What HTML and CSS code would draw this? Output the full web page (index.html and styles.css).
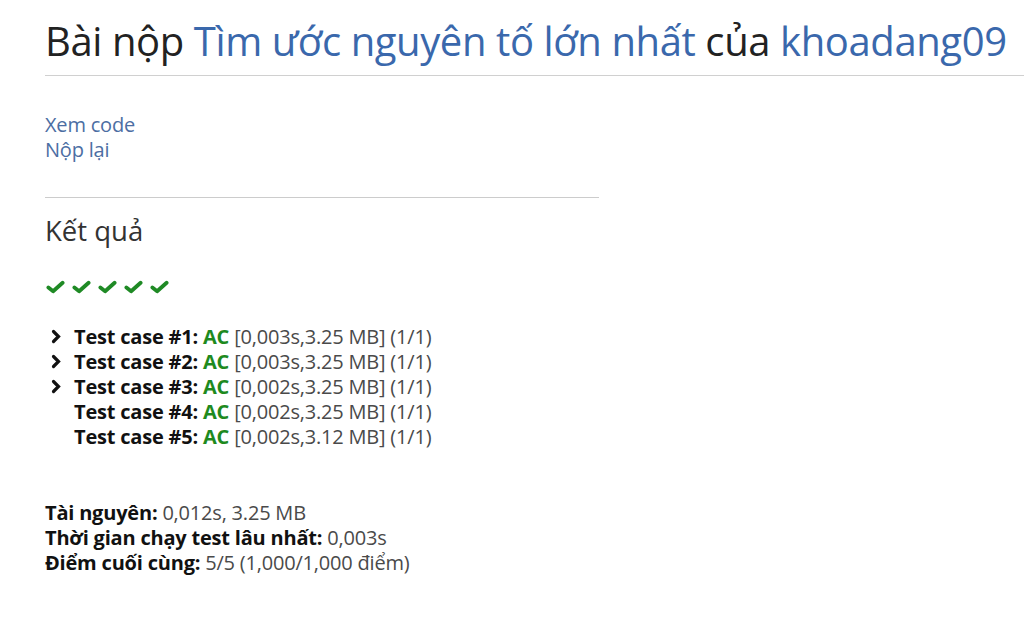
FILE: index.html
```html
<!DOCTYPE html>
<html lang="vi">
<head>
<meta charset="utf-8">
<link rel="stylesheet" href="styles.css">
</head>
<body>
<div class="page">
  <h1 class="title">Bài nộp <a href="#">Tìm ước nguyên tố lớn nhất</a> của <a href="#">khoadang09</a></h1>
  <div class="content">
    <div class="links">
      <a href="#">Xem code</a>
      <a href="#">Nộp lại</a>
    </div>
    <hr class="sep">
    <h2 class="result-title">Kết quả</h2>
    <div class="checks">
      <svg class="check" viewBox="0 0 20 14"><path d="M2.5 7.5 L7.5 11.5 L17.5 2.5"/></svg>
      <svg class="check" viewBox="0 0 20 14"><path d="M2.5 7.5 L7.5 11.5 L17.5 2.5"/></svg>
      <svg class="check" viewBox="0 0 20 14"><path d="M2.5 7.5 L7.5 11.5 L17.5 2.5"/></svg>
      <svg class="check" viewBox="0 0 20 14"><path d="M2.5 7.5 L7.5 11.5 L17.5 2.5"/></svg>
      <svg class="check" viewBox="0 0 20 14"><path d="M2.5 7.5 L7.5 11.5 L17.5 2.5"/></svg>
    </div>
    <div class="cases">
      <div class="case"><span class="chev"><svg viewBox="0 0 10 14"><path d="M2.5 2 L7.5 7 L2.5 12"/></svg></span><span><b>Test case #1:</b> <span class="ac">AC</span> [0,003s,3.25 MB] (1/1)</span></div>
      <div class="case"><span class="chev"><svg viewBox="0 0 10 14"><path d="M2.5 2 L7.5 7 L2.5 12"/></svg></span><span><b>Test case #2:</b> <span class="ac">AC</span> [0,003s,3.25 MB] (1/1)</span></div>
      <div class="case"><span class="chev"><svg viewBox="0 0 10 14"><path d="M2.5 2 L7.5 7 L2.5 12"/></svg></span><span><b>Test case #3:</b> <span class="ac">AC</span> [0,002s,3.25 MB] (1/1)</span></div>
      <div class="case"><span class="chev"></span><span><b>Test case #4:</b> <span class="ac">AC</span> [0,002s,3.25 MB] (1/1)</span></div>
      <div class="case"><span class="chev"></span><span><b>Test case #5:</b> <span class="ac">AC</span> [0,002s,3.12 MB] (1/1)</span></div>
    </div>
    <div class="summary">
      <div><b>Tài nguyên:</b> 0,012s, 3.25 MB</div>
      <div><b>Thời gian chạy test lâu nhất:</b> 0,003s</div>
      <div><b>Điểm cuối cùng:</b> 5/5 (1,000/1,000 điểm)</div>
    </div>
  </div>
</div>
</body>
</html>
```
FILE: styles.css
```css
html, body {
  margin: 0;
  padding: 0;
  background: #fff;
}
body {
  font-family: "Open Sans", "Noto Sans", sans-serif;
  color: #4a4a4a;
}
a {
  color: #3d6bab;
  text-decoration: none;
}
.page {
  padding-left: 45px;
}
.title {
  margin: 0;
  padding-top: 17px;
  height: 76px;
  box-sizing: border-box;
  font-weight: 400;
  font-size: 40px;
  line-height: 48px;
  color: #222;
  border-bottom: 1px solid #d0d0d0;
  letter-spacing: -0.4px;
  white-space: nowrap;
}
.title a {
  color: #3a68ac;
}
.content {
  width: 554px;
}
.links {
  display: flex;
  flex-direction: column;
  padding-top: 36px;
  font-size: 20px;
  line-height: 25px;
  letter-spacing: -0.2px;
}
.links a {
  color: #4c6ea3;
}
.sep {
  margin: 35px 0 0;
  border: 0;
  border-top: 1px solid #ccc;
}
.result-title {
  margin: 15px 0 0;
  font-weight: 400;
  font-size: 27.5px;
  line-height: 36px;
  color: #333;
}
.checks {
  display: flex;
  gap: 7px;
  margin-top: 31px;
  padding-left: 1px;
}
.check {
  width: 19px;
  height: 14px;
  fill: none;
  stroke: #1f8a25;
  stroke-width: 4;
  stroke-linecap: round;
  stroke-linejoin: round;
}
.cases {
  margin-top: 30px;
  font-size: 20px;
  line-height: 25px;
  letter-spacing: -0.2px;
}
.case {
  display: flex;
  align-items: center;
  white-space: pre;
}
.case b {
  color: #111;
  font-weight: 700;
}
.chev {
  width: 29px;
  display: flex;
  padding-left: 6px;
  box-sizing: border-box;
}
.chev svg {
  width: 10px;
  height: 15px;
  fill: none;
  stroke: #111;
  stroke-width: 3.2;
  stroke-linecap: round;
  stroke-linejoin: miter;
}
.ac {
  color: #1e8a1e;
  font-weight: 700;
}
.summary {
  margin-top: 51px;
  font-size: 20px;
  line-height: 25px;
  letter-spacing: -0.2px;
}
.summary b {
  color: #111;
}
```
